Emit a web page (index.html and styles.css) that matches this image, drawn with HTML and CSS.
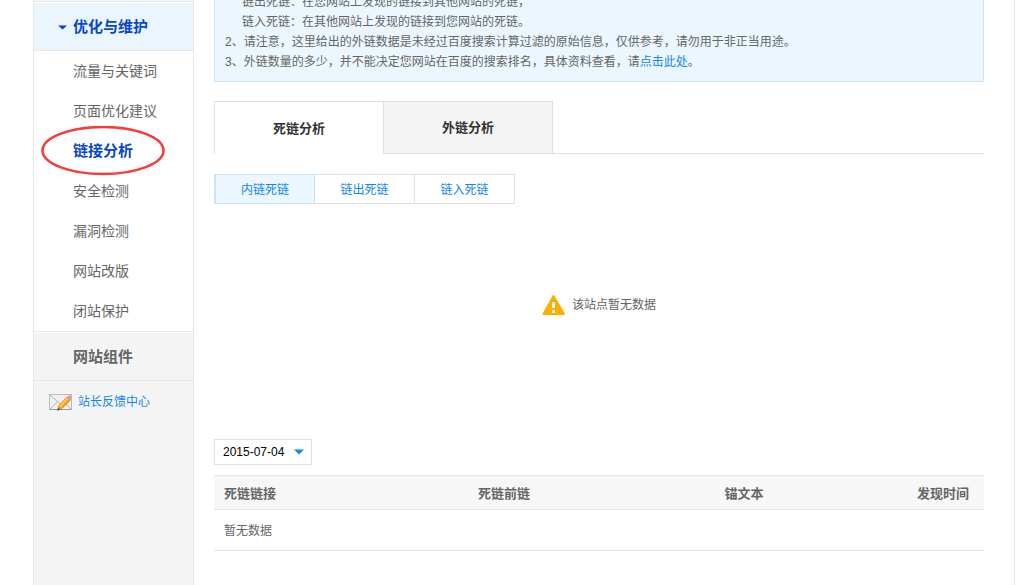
FILE: index.html
```html
<!DOCTYPE html>
<html lang="zh-CN">
  <head>
    <meta charset="UTF-8">
    <meta name="viewport" content="width=device-width, initial-scale=1">
    <title>链接分析</title>
    <link rel="stylesheet" href="styles.css">
  </head>

  <body>
    <div class="page">

      <nav class="sidebar">
        <button type="button" class="menu-title open">
          <svg class="caret" width="9" height="5" viewBox="0 0 9 5"><path d="M0 0.500H9L4.500 4.500Z" fill="#0548c8"/></svg>
          优化与维护
        </button>
        <ul class="menu">
          <li><a href="#">流量与关键词</a></li>
          <li><a href="#">页面优化建议</a></li>
          <li class="current">
            <a href="#">链接分析</a>
            <svg class="mark" width="126" height="50" viewBox="0 0 126 50">
              <ellipse cx="63" cy="24.500" rx="60.500" ry="23.500" fill="none" stroke="#f93a3a" stroke-width="2.500"/>
            </svg>
          </li>
          <li><a href="#">安全检测</a></li>
          <li><a href="#">漏洞检测</a></li>
          <li><a href="#">网站改版</a></li>
          <li><a href="#">闭站保护</a></li>
        </ul>
        <button type="button" class="menu-title">网站组件</button>
        <a class="feedback" href="#">
          <svg width="24" height="20" viewBox="0 0 24 20">
            <rect x="0.500" y="2.500" width="22" height="15" fill="#f0f0f0" stroke="#bbb"/>
            <path d="M1 3L11.500 12L22 3M1 17L8.500 9.500M22 17L14.500 9.500" fill="none" stroke="#b5b5b5"/>
            <path d="M1 17.500H22" stroke="#999"/>
            <path d="M8.500 18.500L10 13.500L18 5L21.500 8L13 16.500Z" fill="#f9a51c" stroke="#c8791a" stroke-width="0.700"/>
            <path d="M11 14.500L19 6" stroke="#ffd869" stroke-width="1.200"/>
            <path d="M8.500 18.500L9.300 15.800L11.200 17.600Z" fill="#444"/>
            <path d="M18 5L19.300 3.700Q20.500 3 21.800 4.200Q23.200 5.500 22.500 6.800L21.500 8Z" fill="#e78fc0"/>
          </svg>
          <span>站长反馈中心</span>
        </a>
      </nav>

      <main class="content">
        <div class="notice">
          <p class="sub">链出死链：在您网站上发现的链接到其他网站的死链，</p>
          <p class="sub">链入死链：在其他网站上发现的链接到您网站的死链。</p>
          <p>2、请注意，这里给出的外链数据是未经过百度搜索计算过滤的原始信息，仅供参考，请勿用于非正当用途。</p>
          <p>3、外链数量的多少，并不能决定您网站在百度的搜索排名，具体资料查看，请<a href="#">点击此处</a>。</p>
        </div>

        <div class="tabs">
          <button type="button" class="active">死链分析</button>
          <button type="button">外链分析</button>
        </div>

        <div class="subtabs">
          <button type="button" class="active">内链死链</button>
          <button type="button">链出死链</button>
          <button type="button">链入死链</button>
        </div>

        <div class="empty">
          <svg width="24" height="22" viewBox="0 0 24 22">
            <path d="M11.500 2L22 20H1.500Z" fill="#ffae00" stroke="#ffae00" stroke-width="2" stroke-linejoin="round"/>
            <path d="M10 8H13V14H10ZM10 16H13V19H10Z" fill="#fff"/>
          </svg>
          该站点暂无数据
        </div>

        <div class="date">
          <select aria-label="日期">
            <option>2015-07-04</option>
          </select>
          <svg class="arrow" width="10" height="6" viewBox="0 0 10 6"><path d="M0 0.500H10L5 5.500Z" fill="#1287f0"/></svg>
        </div>

        <table class="links">
          <thead>
            <tr>
              <th class="c1">死链链接</th>
              <th class="c2">死链前链</th>
              <th class="c3">锚文本</th>
              <th>发现时间</th>
            </tr>
          </thead>
          <tbody>
            <tr><td colspan="4">暂无数据</td></tr>
          </tbody>
        </table>
      </main>

    </div>
  </body>
</html>
```

FILE: styles.css
```css
* {
  box-sizing: border-box;
}
body {
  margin: 0;
  background: #fff;
  color: #666;
  font: 12px/20px "Liberation Sans", "Noto Sans CJK SC", sans-serif;
}
a {
  color: #1287f0;
  text-decoration: none;
}
button {
  font-family: inherit;
  cursor: pointer;
}
p, ul {
  margin: 0;
  padding: 0;
}
svg {
  flex: none;
}

.page {
  display: flex;
  min-height: 100vh;
  margin: 0 14px 0 33px;
  border-right: 1px solid #e7e7e7;
}

/* left menu */
.sidebar {
  flex: none;
  width: 161px;
  padding-top: 1px;
  background: #f4f4f4;
  border: 1px solid #e7e7e7;
  border-width: 0 1px;
}
.menu-title {
  position: relative;
  display: block;
  width: 100%;
  height: 50px;
  padding: 0 0 2px 39px;
  border: 1px solid #e7e7e7;
  border-width: 1px 0;
  background: #f4f4f4;
  box-shadow: inset 0 1px #fff;
  color: #666;
  font-size: 15px;
  font-weight: bold;
  text-align: left;
}
.menu-title.open {
  background: #ebf5fe;
  color: #0548c8;
}
.caret {
  position: absolute;
  left: 24px;
  top: 23px;
}
.menu {
  list-style: none;
  background: #fff;
}
.menu li {
  position: relative;
  height: 40px;
}
.menu a {
  display: block;
  padding-left: 39px;
  color: #666;
  font-size: 14px;
  line-height: 40px;
}
.menu .current a {
  color: #0548c8;
  font-size: 15px;
  font-weight: bold;
}
.mark {
  position: absolute;
  left: 6px;
  top: -5px;
  pointer-events: none;
}
.feedback {
  display: flex;
  align-items: center;
  gap: 5px;
  height: 42px;
  padding-left: 15px;
}

/* right part */
.content {
  flex: 1;
  padding: 0 30px 0 20px;
}
.notice {
  overflow: hidden;
  padding: 0 10px 9px;
  border: 1px solid #c8e4fa;
  border-top: 0;
  background: #ebf6ff;
}
.notice p:first-child {
  margin-top: -8px;
}
.notice .sub {
  padding-left: 17px;
}

.tabs {
  display: flex;
  height: 53px;
  margin-top: 19px;
}
.tabs button {
  width: 170px;
  padding: 0 0 2px;
  border: 1px solid #e0e0e0;
  background: #f4f4f4;
  color: #333;
  font-size: 13px;
  font-weight: bold;
}
.tabs .active {
  width: 169px;
  border-width: 1px 0 0 1px;
  background: #fff;
}
.tabs::after {
  content: "";
  flex: 1;
  border-bottom: 1px solid #e0e0e0;
}

.subtabs {
  display: flex;
  height: 30px;
  margin-top: 20px;
  border-left: 1px solid #e0e0e0;
}
.subtabs button {
  width: 100px;
  padding: 0 0 2px;
  border: 1px solid #e0e0e0;
  border-left: 0;
  background: #fff;
  color: #1287f0;
  font-size: 12px;
}
.subtabs .active {
  border: 1px solid #c8e4fa;
  background: #ebf6ff;
}

.empty {
  display: flex;
  align-items: center;
  justify-content: center;
  gap: 6px;
  height: 202px;
  margin-bottom: 33px;
}

.date {
  position: relative;
  width: 98px;
}
.date select {
  display: block;
  width: 100%;
  height: 26px;
  padding: 0 8px 1px;
  border: 1px solid #e0e0e0;
  border-radius: 0;
  background: #fff;
  color: #000;
  font: 12px "Liberation Sans", sans-serif;
  appearance: none;
}
.arrow {
  position: absolute;
  right: 8px;
  top: 10px;
  pointer-events: none;
}

.links {
  width: 100%;
  margin-top: 10px;
  border-collapse: separate;
  border-spacing: 0;
  table-layout: fixed;
}
.links th, .links td {
  padding: 2px 0 0 10px;
  border-bottom: 1px solid #e7e7e7;
  text-align: left;
}
.links th {
  height: 35px;
  border-top: 1px solid #e7e7e7;
  background: #f7f7f7;
  font-size: 13px;
}
.links td {
  height: 41px;
}
.c1 {
  width: 33%;
}
.c2 {
  width: 32%;
}
.c3 {
  width: 25%;
}
```
